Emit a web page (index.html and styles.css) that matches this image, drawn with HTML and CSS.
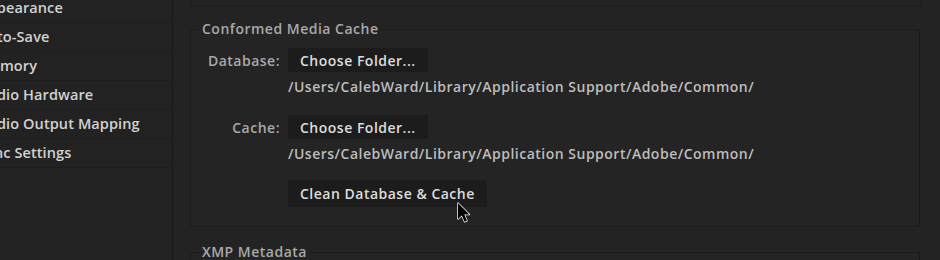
FILE: index.html
```html
<!DOCTYPE html>
<html>
<head>
<meta charset="utf-8">
<link rel="stylesheet" href="styles.css">
</head>
<body>
<div class="app">
  <nav class="sidebar">
    <ul class="nav-list">
      <li>Appearance</li>
      <li>Auto-Save</li>
      <li>Memory</li>
      <li>Audio Hardware</li>
      <li>Audio Output Mapping</li>
      <li>Sync Settings</li>
    </ul>
  </nav>
  <main class="content">
    <div class="prev-box"></div>
    <fieldset class="group cache-group">
      <legend class="group-title">Conformed Media Cache</legend>
      <div class="field">
        <span class="field-label">Database:</span>
        <button class="btn">Choose Folder...</button>
      </div>
      <div class="path">/Users/CalebWard/Library/Application Support/Adobe/Common/</div>
      <div class="field field-cache">
        <span class="field-label">Cache:</span>
        <button class="btn">Choose Folder...</button>
      </div>
      <div class="path">/Users/CalebWard/Library/Application Support/Adobe/Common/</div>
      <div class="field field-clean">
        <span class="field-label"></span>
        <span class="btn-wrap">
          <button class="btn btn-clean">Clean Database &amp; Cache</button>
          <svg class="cursor" width="14" height="22" viewBox="0 0 14 22"><path d="M1 1 L1 17 L4.8 13.4 L7.6 19.8 L10 18.8 L7.3 12.6 L12.4 12.6 Z" fill="#000" stroke="#fff" stroke-width="1.4" stroke-linejoin="round"/><path d="M1 1 L1 17 L4.8 13.4 L7.6 19.8 L10 18.8 L7.3 12.6 L12.4 12.6 Z" fill="#000"/></svg>
        </span>
      </div>
    </fieldset>
    <fieldset class="group xmp-group">
      <legend class="group-title">XMP Metadata</legend>
    </fieldset>
  </main>
</div>
</body>
</html>
```

FILE: styles.css
```css
html, body {
  margin: 0;
  padding: 0;
  background: #232323;
  overflow: hidden;
}
body {
  width: 940px;
  height: 260px;
  font-family: "Open Sans", "DejaVu Sans", sans-serif;
  -webkit-font-smoothing: antialiased;
}
.app {
  display: flex;
  height: 260px;
}
.sidebar {
  width: 172px;
  flex: none;
  border-right: 1px solid #1a1a1a;
  overflow: hidden;
  background: #222222;
}
.nav-list {
  list-style: none;
  margin: -6px 0 0 0;
  padding: 0;
}
.nav-list li {
  height: 28px;
  line-height: 28px;
  border-bottom: 1px solid #1e1e1e;
  color: #d2d2d2;
  font-size: 14.5px;
  font-weight: 600;
  white-space: nowrap;
  text-indent: -22px;
  letter-spacing: 0.1px;
}
.content {
  flex: 1;
  padding-left: 17px;
  overflow: hidden;
}
.prev-box {
  width: 730px;
  height: 14px;
  margin-top: -10px;
  border: 1px solid #1b1b1b;
  background: #242424;
}
.group {
  width: 730px;
  margin: 0;
  padding: 0;
  border: 1px solid #1b1b1b;
  background: #242424;
  box-sizing: border-box;
}
.cache-group {
  margin-top: 14px;
  height: 207px;
  padding-top: 10px;
}
.xmp-group {
  margin-top: 16px;
  height: 40px;
}
.group-title {
  margin-left: 8px;
  padding: 0 3px;
  color: #a8a8a8;
  font-size: 14px;
  font-weight: 600;
  line-height: 18px;
  letter-spacing: 0.5px;
}
.field {
  display: grid;
  grid-template-columns: 89px auto;
  column-gap: 8px;
  align-items: center;
  justify-content: start;
}
.field-cache {
  margin-top: 19px;
}
.field-clean {
  margin-top: 17px;
}
.field-label {
  text-align: right;
  color: #a9a9a9;
  font-size: 14px;
  font-weight: 600;
  letter-spacing: 0.5px;
}
.btn {
  height: 24px;
  padding: 0 12px;
  border: none;
  background: #1c1c1c;
  color: #dcdcdc;
  font-family: inherit;
  font-size: 14px;
  font-weight: 600;
  letter-spacing: 0.5px;
  cursor: default;
  text-align: left;
}
.btn-clean {
  height: 27px;
}
.btn-wrap {
  position: relative;
  display: inline-block;
}
.cursor {
  position: absolute;
  left: 169px;
  top: 22px;
}
.path {
  margin: 6px 0 0 97px;
  height: 18px;
  line-height: 18px;
  color: #bdbdbd;
  font-size: 14px;
  font-weight: 600;
  letter-spacing: 0.5px;
  white-space: nowrap;
}
```
